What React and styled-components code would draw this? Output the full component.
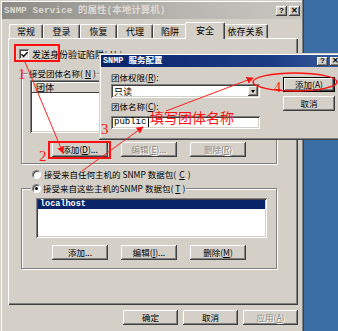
import React from "react";
import styled, { createGlobalStyle, css } from "styled-components";

const Global = createGlobalStyle`
  html, body { margin: 0; padding: 0; }
  body {
    background: #3a6ea5;
    font-family: "Noto Sans CJK SC", sans-serif;
  }
`;

const raised = css`
  box-shadow: inset -1px -1px #404040, inset 1px 1px #ffffff,
    inset -2px -2px #808080, inset 2px 2px #d4d0c8;
`;

const sunken = css`
  box-shadow: inset 1px 1px #808080, inset -1px -1px #ffffff,
    inset 2px 2px #404040, inset -2px -2px #d4d0c8;
`;

const Desktop = styled.div`
  position: relative;
  width: 338px;
  height: 331px;
  overflow: hidden;
  background: #3a6ea5;
  font-size: 8.5px;
  line-height: 11px;
  color: #000;
`;

const Window = styled.div`
  width: 304px;
  height: 331px;
  box-sizing: border-box;
  padding: 2px 2px 0 2px;
  background: #d4d0c8;
  box-shadow: inset -1px 0 #404040, inset -2px 0 #808080, inset 1px 1px #d4d0c8,
    inset 2px 2px #ffffff;
  display: flex;
  flex-direction: column;
`;

const TitleBar = styled.div`
  height: 17px;
  display: flex;
  align-items: center;
  justify-content: space-between;
  padding: 0 2px 0 2px;
  background: ${(p) =>
    p.active
      ? "linear-gradient(90deg, #0a246a, #1c3c82 70%, #3a5c9c)"
      : "linear-gradient(90deg, #8c8a84, #b8b6b0 60%, #c8c6c0)"};
`;

const TitleText = styled.span`
  font-family: "Liberation Mono", "Noto Sans CJK SC", monospace;
  font-weight: bold;
  font-size: ${(p) => (p.small ? 8.5 : 9.5)}px;
  color: ${(p) => (p.active ? "#ffffff" : "#dcdad4")};
  white-space: nowrap;
`;

const CaptionGroup = styled.div`
  display: flex;
  gap: 2px;
`;

const CaptionBtn = styled.div`
  width: 11px;
  height: ${(p) => p.h || 10}px;
  box-sizing: border-box;
  background: #d4d0c8;
  ${raised};
  display: flex;
  align-items: center;
  justify-content: center;
  font-family: "Liberation Sans", sans-serif;
  font-weight: bold;
  font-size: 8px;
  line-height: 8px;
`;

const Tabs = styled.div`
  display: flex;
  align-items: flex-end;
  margin-top: 2px;
  padding-left: 7px;
  height: 17px;
  position: relative;
  z-index: 1;
`;

const Tab = styled.div`
  width: ${(p) => p.w}px;
  height: ${(p) => (p.sel ? 17 : 14)}px;
  box-sizing: border-box;
  margin: 0 ${(p) => (p.sel ? -2 : 0)}px ${(p) => (p.sel ? -1 : 0)}px;
  padding-top: ${(p) => (p.sel ? 2 : 1)}px;
  background: #d4d0c8;
  border-top: 1px solid #fff;
  border-left: 1px solid #fff;
  border-right: 1px solid #404040;
  border-radius: 2px 2px 0 0;
  box-shadow: inset -1px 0 #808080;
  text-align: center;
  font-size: 9px;
  white-space: nowrap;
  position: relative;
  z-index: ${(p) => (p.sel ? 2 : 0)};
`;

const Panel = styled.div`
  margin: 0 4px 0 6px;
  height: 267px;
  box-sizing: border-box;
  padding: 10px 0 0 11px;
  background: #d4d0c8;
  box-shadow: inset 1px 1px #ffffff, inset -1px -1px #404040, inset -2px -2px #808080;
  display: flex;
  flex-direction: column;
`;

const CheckRow = styled.label`
  display: flex;
  align-items: center;
  gap: 3px;
  height: 12px;
  white-space: nowrap;
  font-size: 9px;
`;

const CheckBox = styled.span`
  width: 10px;
  height: 10px;
  box-sizing: border-box;
  background: #fff;
  ${sunken};
  display: flex;
  align-items: center;
  justify-content: center;
`;

const Group = styled.div`
  margin: ${(p) => p.mt}px 0 0 2px;
  width: 256px;
  height: ${(p) => p.h}px;
  box-sizing: border-box;
  border: 1px solid #808080;
  box-shadow: inset 1px 1px #ffffff, 1px 1px #ffffff;
  display: flex;
  flex-direction: column;
`;

const Legend = styled.div`
  align-self: flex-start;
  margin: -6px 0 0 ${(p) => p.ml}px;
  padding: 0 1px;
  background: #d4d0c8;
  white-space: nowrap;
  display: flex;
  align-items: center;
  gap: 2px;
  height: 11px;
`;

const ListView = styled.div`
  margin: ${(p) => p.mt}px 0 0 ${(p) => p.ml}px;
  width: ${(p) => p.w}px;
  height: ${(p) => p.h}px;
  box-sizing: border-box;
  padding: 2px;
  background: #fff;
  ${sunken};
`;

const Header = styled.div`
  display: flex;
  height: 11px;
  background: #d4d0c8;
`;

const HeaderCell = styled.div`
  width: ${(p) => p.w}px;
  flex: ${(p) => (p.w ? "none" : 1)};
  box-sizing: border-box;
  padding-left: 4px;
  box-shadow: inset -1px -1px #404040, inset 1px 1px #ffffff;
  font-size: 9px;
  line-height: 11px;
`;

const Item = styled.div`
  height: 9px;
  line-height: 9px;
  padding-left: 2px;
  background: ${(p) => (p.sel ? "#0a246a" : "transparent")};
  color: ${(p) => (p.sel ? "#fff" : "#000")};
  font-family: "Liberation Mono", monospace;
  font-weight: bold;
  font-size: 8.5px;
`;

const ButtonRow = styled.div`
  display: flex;
  gap: ${(p) => p.gap || 13}px;
  margin: ${(p) => p.mt}px 0 0 ${(p) => p.ml}px;
  justify-content: ${(p) => (p.end ? "flex-end" : "flex-start")};
`;

const Btn = styled.div`
  width: ${(p) => p.w || 56}px;
  height: 15px;
  box-sizing: border-box;
  background: #d4d0c8;
  ${(p) =>
    p.def
      ? css`
          box-shadow: inset 0 0 0 1px #000, inset -2px -2px #404040,
            inset 2px 2px #ffffff, inset -3px -3px #808080;
        `
      : raised};
  display: flex;
  align-items: center;
  justify-content: center;
  white-space: nowrap;
  font-size: 8.5px;
  color: ${(p) => (p.off ? "#8c8a86" : "#000")};
  text-shadow: ${(p) => (p.off ? "1px 1px #ffffff" : "none")};
`;

const RadioRow = styled.div`
  display: flex;
  align-items: center;
  gap: 3px;
  height: 11px;
  margin: ${(p) => p.mt || 0}px 0 0 ${(p) => p.ml || 0}px;
  white-space: nowrap;
  font-size: 8.5px;
`;

const Radio = styled.span`
  width: 9px;
  height: 9px;
  box-sizing: border-box;
  border-radius: 50%;
  background: #fff;
  border: 1px solid;
  border-color: #808080 #ffffff #ffffff #808080;
  box-shadow: inset 1px 1px #404040;
  display: flex;
  align-items: center;
  justify-content: center;
  &::after {
    content: "";
    width: 3px;
    height: 3px;
    border-radius: 50%;
    background: ${(p) => (p.on ? "#000" : "transparent")};
  }
`;

const Footer = styled.div`
  display: flex;
  justify-content: flex-end;
  gap: 5px;
  margin: 5px 4px 0 0;
`;

/* the overlaid dialog */
const Dialog = styled.div`
  position: absolute;
  left: 99px;
  top: 53px;
  width: 246px;
  height: 87px;
  box-sizing: border-box;
  padding: 2px;
  background: #d4d0c8;
  box-shadow: inset -1px -1px #404040, inset 1px 1px #d4d0c8,
    inset -2px -2px #808080, inset 2px 2px #ffffff;
  display: flex;
  flex-direction: column;
`;

const DialogBody = styled.div`
  display: flex;
  padding-left: 10px;
`;

const FormCol = styled.div`
  width: 149px;
  padding-top: 5px;
  display: flex;
  flex-direction: column;
`;

const FieldLabel = styled.div`
  height: 11px;
  white-space: nowrap;
  font-size: 8.5px;
  margin-top: ${(p) => p.mt || 0}px;
`;

const Field = styled.div`
  margin-top: ${(p) => p.mt}px;
  height: ${(p) => p.h}px;
  box-sizing: border-box;
  padding: 0 2px 0 3px;
  background: #fff;
  ${sunken};
  display: flex;
  align-items: center;
  justify-content: space-between;
  font-size: 9px;
  font-family: ${(p) =>
    p.mono ? '"Liberation Mono", monospace' : '"Noto Sans CJK SC", sans-serif'};
`;

const DropBtn = styled.span`
  width: 10px;
  height: 10px;
  box-sizing: border-box;
  background: #d4d0c8;
  ${raised};
  display: flex;
  align-items: center;
  justify-content: center;
  &::after {
    content: "";
    border-left: 2.5px solid transparent;
    border-right: 2.5px solid transparent;
    border-top: 3px solid #000;
  }
`;

const Caret = styled.span`
  display: inline-block;
  width: 1px;
  height: 9px;
  margin-left: 2px;
  background: #000;
  vertical-align: middle;
`;

const ActionCol = styled.div`
  margin-left: 23px;
  padding-top: 10px;
  display: flex;
  flex-direction: column;
  gap: 4px;
`;

/* red annotations drawn over the screenshot */
const Marks = styled.svg`
  position: absolute;
  left: 0;
  top: 0;
  pointer-events: none;
`;

const Note = styled.span`
  position: absolute;
  left: ${(p) => p.x}px;
  top: ${(p) => p.y}px;
  color: #ff1010;
  font-family: ${(p) =>
    p.cjk ? '"Noto Sans CJK SC", sans-serif' : '"Liberation Serif", serif'};
  font-size: ${(p) => p.size}px;
  line-height: 1;
  white-space: nowrap;
  pointer-events: none;
`;

const tabs = [
  ["常规", 34],
  ["登录", 37],
  ["恢复", 37],
  ["代理", 36],
  ["陷阱", 34],
  ["安全", 40, true],
  ["依存关系", 45],
];

export default function App() {
  return (
    <>
      <Global />
      <Desktop>
        <Window>
          <TitleBar>
            <TitleText>SNMP Service 的属性(本地计算机)</TitleText>
            <CaptionGroup>
              <CaptionBtn>?</CaptionBtn>
              <CaptionBtn>✕</CaptionBtn>
            </CaptionGroup>
          </TitleBar>

          <Tabs>
            {tabs.map(([label, w, sel]) => (
              <Tab key={label} w={w} sel={sel}>
                {label}
              </Tab>
            ))}
          </Tabs>

          <Panel>
            <CheckRow>
              <CheckBox>
                <svg width="7" height="7" viewBox="0 0 7 7">
                  <path d="M0.5 3.2 L2.6 5.4 L6.5 1.2" stroke="#000" strokeWidth="1.4" fill="none" />
                </svg>
              </CheckBox>
              发送身份验证陷阱(<u>U</u>)
            </CheckRow>

            <Group mt={13} h={91}>
              <Legend ml={6}>接受团体名称(<u>N</u>)</Legend>
              <ListView mt={1} ml={8} w={239} h={53}>
                <Header>
                  <HeaderCell w={150}>团体</HeaderCell>
                  <HeaderCell />
                </Header>
              </ListView>
              <ButtonRow mt={9} ml={30}>
                <Btn>添加(<u>D</u>)...</Btn>
                <Btn off>编辑(<u>E</u>)...</Btn>
                <Btn off>删除(<u>R</u>)</Btn>
              </ButtonRow>
            </Group>

            <RadioRow mt={5} ml={13}>
              <Radio />
              接受来自任何主机的 SNMP 数据包(<u>C</u>)
            </RadioRow>

            <Group mt={8} h={81}>
              <Legend ml={9}>
                <Radio on />
                接受来自这些主机的SNMP 数据包(<u>T</u>)
              </Legend>
              <ListView mt={4} ml={14} w={231} h={40}>
                <Item sel>localhost</Item>
              </ListView>
              <ButtonRow mt={7} ml={30}>
                <Btn>添加...</Btn>
                <Btn>编辑(<u>I</u>)...</Btn>
                <Btn>删除(<u>M</u>)</Btn>
              </ButtonRow>
            </Group>
          </Panel>

          <Footer>
            <Btn w={55}>确定</Btn>
            <Btn w={55}>取消</Btn>
            <Btn w={55} off>
              应用(<u>A</u>)
            </Btn>
          </Footer>
        </Window>

        <Dialog>
          <TitleBar active style={{ height: 12 }}>
            <TitleText active small>
              SNMP 服务配置
            </TitleText>
            <CaptionGroup>
              <CaptionBtn h={9}>?</CaptionBtn>
              <CaptionBtn h={9}>✕</CaptionBtn>
            </CaptionGroup>
          </TitleBar>
          <DialogBody>
            <FormCol>
              <FieldLabel>团体权限(<u>R</u>):</FieldLabel>
              <Field mt={1} h={14}>
                只读
                <DropBtn />
              </Field>
              <FieldLabel mt={3}>团体名称(<u>C</u>):</FieldLabel>
              <Field mt={4} h={13} mono style={{ justifyContent: "flex-start" }}>
                public
                <Caret />
              </Field>
            </FormCol>
            <ActionCol>
              <Btn w={52} def>
                添加(<u>A</u>)
              </Btn>
              <Btn w={52}>取消</Btn>
            </ActionCol>
          </DialogBody>
        </Dialog>

        <Marks width="338" height="331" viewBox="0 0 338 331">
          <defs>
            <marker id="head" viewBox="0 0 10 10" refX="9" refY="5" markerWidth="7" markerHeight="7" orient="auto">
              <path d="M0 0 L10 5 L0 10 z" fill="#ff1010" />
            </marker>
          </defs>
          <rect x="15" y="45" width="44" height="16" fill="none" stroke="#ff1010" strokeWidth="2" />
          <rect x="49" y="142" width="61" height="16" fill="none" stroke="#ff1010" strokeWidth="2" />
          <line x1="25" y1="62" x2="63" y2="153" stroke="#ff2020" strokeWidth="1" markerEnd="url(#head)" />
          <line x1="82" y1="171" x2="143" y2="127" stroke="#ff2020" strokeWidth="1" markerEnd="url(#head)" />
          <line x1="166" y1="111" x2="253" y2="78" stroke="#ff2020" strokeWidth="1" markerEnd="url(#head)" />
          <ellipse cx="295" cy="82" rx="42" ry="9" fill="none" stroke="#ff1010" strokeWidth="1.5" />
        </Marks>
        <Note x={18} y={67} size={15}>1</Note>
        <Note x={39} y={149} size={15}>2</Note>
        <Note x={101} y={122} size={15}>3</Note>
        <Note x={274} y={81} size={14}>4</Note>
        <Note x={150} y={110} size={14} cjk>
          填写团体名称
        </Note>
      </Desktop>
    </>
  );
}
